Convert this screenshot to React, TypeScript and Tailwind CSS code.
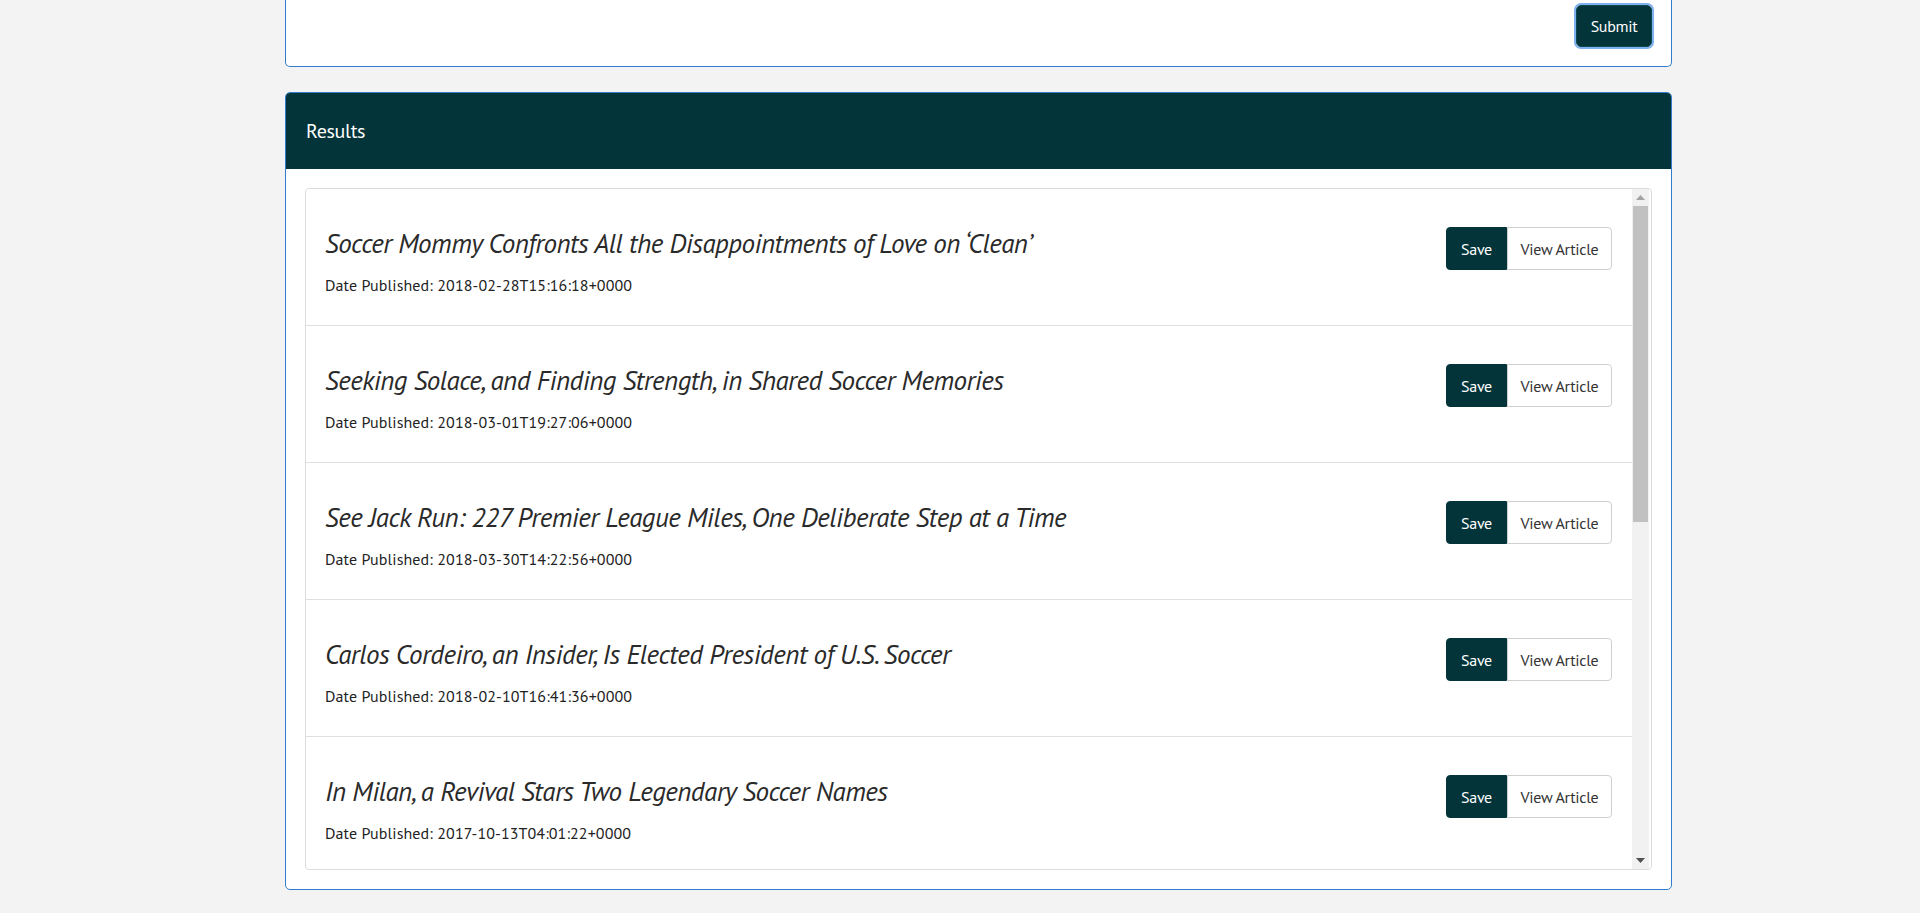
const articles = [
  { title: "Soccer Mommy Confronts All the Disappointments of Love on ‘Clean’", date: "2018-02-28T15:16:18+0000" },
  { title: "Seeking Solace, and Finding Strength, in Shared Soccer Memories", date: "2018-03-01T19:27:06+0000" },
  { title: "See Jack Run: 227 Premier League Miles, One Deliberate Step at a Time", date: "2018-03-30T14:22:56+0000" },
  { title: "Carlos Cordeiro, an Insider, Is Elected President of U.S. Soccer", date: "2018-02-10T16:41:36+0000" },
  { title: "In Milan, a Revival Stars Two Legendary Soccer Names", date: "2017-10-13T04:01:22+0000" },
];

function ArticleRow({ title, date }: { title: string; date: string }) {
  return (
    <div className="flex h-[137px] shrink-0 justify-between border-b border-[#dfdfdf] pl-[19px] pr-[20px]">
      <div className="pt-[37px]">
        <h3 className="text-[27px] leading-[34px] tracking-[-0.5px] italic text-[#2a2a2a]">{title}</h3>
        <p className="mt-[15px] text-[16px] leading-[20px] tracking-[0.1px] text-[#222]">Date Published: {date}</p>
      </div>
      <div className="flex pt-[38px]">
        <button className="h-[43px] w-[61px] rounded-l-[4px] border border-[#03343a] bg-[#03343a] text-[16px] tracking-[-0.3px] text-white">
          Save
        </button>
        <button className="h-[43px] w-[105px] rounded-r-[4px] border border-[#cfcfcf] bg-white text-[16px] tracking-[-0.3px] text-[#333]">
          View Article
        </button>
      </div>
    </div>
  );
}

export default function App() {
  return (
    <div className="h-[913px] overflow-hidden bg-[#f3f3f3] font-['PT_Sans','Roboto','Liberation_Sans',sans-serif]">
      <div className="ml-[285px] w-[1387px]">
        <div className="flex h-[67px] justify-end rounded-b-[5px] border border-t-0 border-[#2f7dcc] bg-white pr-[19px] pt-[5px]">
          <div className="h-[42px] rounded-[5px] ring-2 ring-[#7fb0f0]">
            <button className="h-[42px] w-[76px] rounded-[5px] border border-[#0d4a52] bg-[#03343a] text-[16px] tracking-[-0.3px] text-white">
              Submit
            </button>
          </div>
        </div>

        <div className="mt-[25px] overflow-hidden rounded-[5px] border border-[#2f7dcc] bg-white">
          <div className="flex h-[76px] items-center bg-[#03343a] px-[20px]">
            <h5 className="text-[20px] tracking-[-0.3px] text-white">Results</h5>
          </div>
          <div className="p-[19px]">
            <div className="flex h-[682px] overflow-hidden rounded-[4px] border border-[#dcdcdc]">
              <div className="flex flex-1 flex-col overflow-hidden">
                {articles.map((a) => (
                  <ArticleRow key={a.title} title={a.title} date={a.date} />
                ))}
              </div>
              <div className="flex w-[17px] flex-col bg-[#f1f1f1]">
                <div className="flex h-[17px] items-center justify-center">
                  <svg width="9" height="5" viewBox="0 0 9 5">
                    <path d="M4.5 0L9 5H0z" fill="#a3a3a3" />
                  </svg>
                </div>
                <div className="mx-[1px] h-[316px] bg-[#c1c1c1]" />
                <div className="flex-1" />
                <div className="flex h-[17px] items-center justify-center">
                  <svg width="9" height="5" viewBox="0 0 9 5">
                    <path d="M0 0H9L4.5 5z" fill="#505050" />
                  </svg>
                </div>
              </div>
              <div className="w-[2px]" />
            </div>
          </div>
        </div>
      </div>
    </div>
  );
}
